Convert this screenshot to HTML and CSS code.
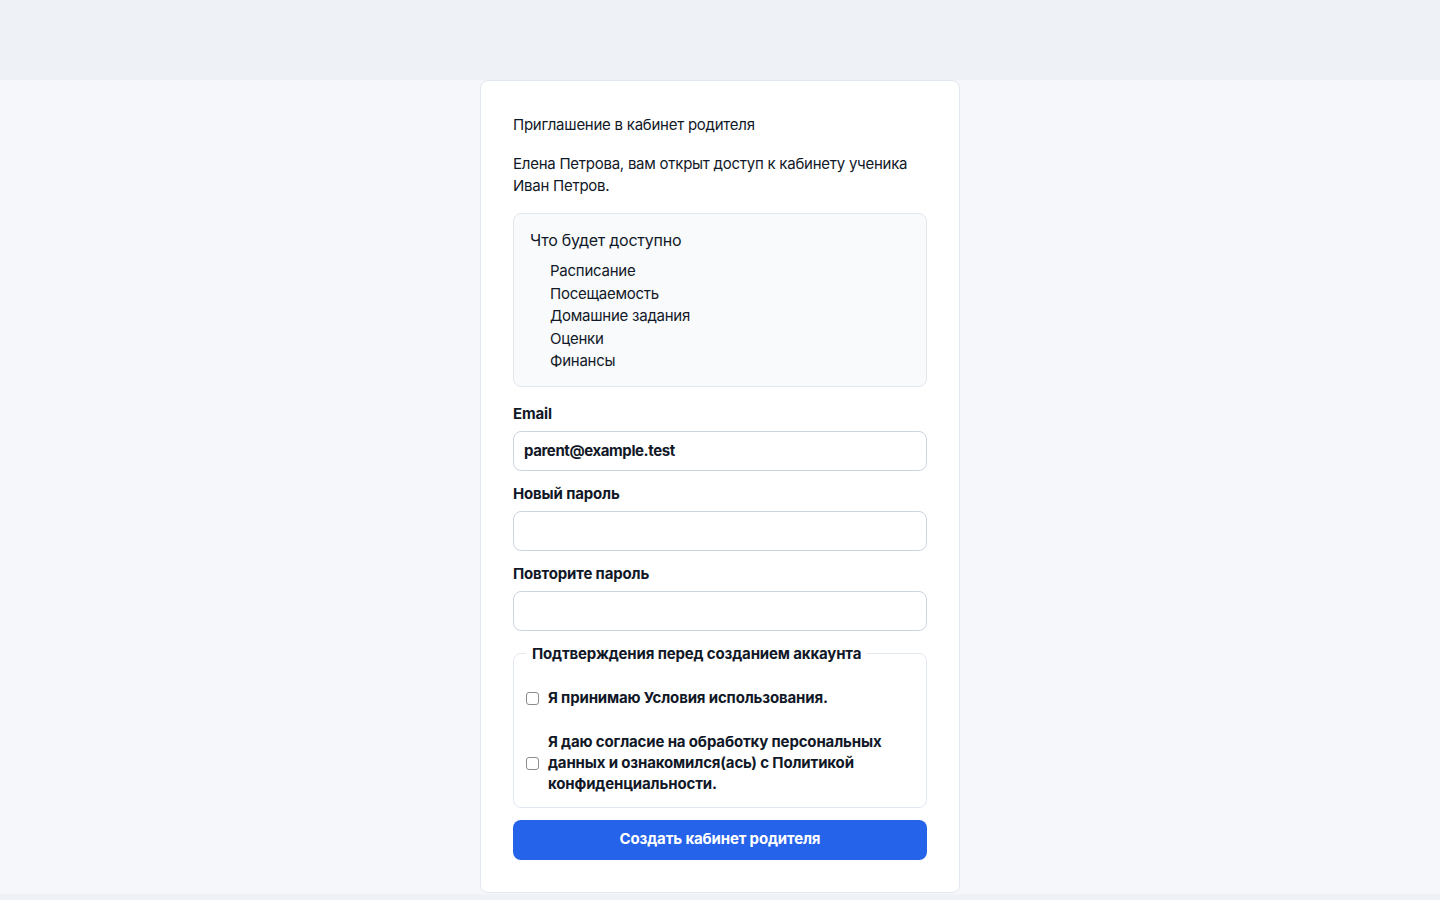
FILE: index.html
```html
<!DOCTYPE html>
<html lang="ru">
<head>
<meta charset="utf-8">
<title>Приглашение в кабинет родителя</title>
<link rel="stylesheet" href="styles.css">
</head>
<body>
<header class="topbar"></header>
<main class="page">
  <section class="card">
    <p class="title">Приглашение в кабинет родителя</p>
    <p class="intro">Елена Петрова, вам открыт доступ к кабинету ученика Иван Петров.</p>
    <div class="access">
      <h2 class="access-title">Что будет доступно</h2>
      <ul class="access-list">
        <li>Расписание</li>
        <li>Посещаемость</li>
        <li>Домашние задания</li>
        <li>Оценки</li>
        <li>Финансы</li>
      </ul>
    </div>
    <form class="form">
      <label class="field-label" for="email">Email</label>
      <input class="input" id="email" type="email" value="parent@example.test">
      <label class="field-label" for="pass">Новый пароль</label>
      <input class="input" id="pass" type="password">
      <label class="field-label" for="pass2">Повторите пароль</label>
      <input class="input" id="pass2" type="password">
      <fieldset class="consents">
        <legend class="consents-legend">Подтверждения перед созданием аккаунта</legend>
        <div class="checks">
          <label class="check"><input type="checkbox" class="checkbox"><span>Я принимаю Условия использования.</span></label>
          <label class="check"><input type="checkbox" class="checkbox"><span>Я даю согласие на обработку персональных данных и ознакомился(ась) с Политикой конфиденциальности.</span></label>
        </div>
      </fieldset>
      <button type="button" class="submit">Создать кабинет родителя</button>
    </form>
  </section>
</main>
</body>
</html>
```

FILE: styles.css
```css
* { box-sizing: border-box; }
html, body { margin: 0; padding: 0; }
body {
  background: #eef1f6;
  font-family: Inter, "Noto Sans", sans-serif;
  color: #111827;
  font-size: 15px;
  line-height: 1.5;
  letter-spacing: -0.25px;
}
.topbar {
  height: 80px;
  background: #eef1f6;
}
.page {
  background: #f5f7fa;
  display: flex;
  justify-content: center;
  padding-bottom: 1px;
}
.card {
  width: 480px;
  background: #ffffff;
  border: 1px solid #e2e8f0;
  border-radius: 8px;
  padding: 33px 32px 32px;
}
.title {
  margin: 0 0 17px;
  line-height: 22px;
}
.intro {
  margin: 0 0 16px;
  line-height: 22px;
}
.access {
  background: #f8fafc;
  border: 1px solid #e2e8f0;
  border-radius: 8px;
  padding: 14px 16px 13px;
}
.access-title {
  margin: 0 0 8px;
  font-size: 16px;
  font-weight: 400;
  line-height: 24px;
}
.access-list {
  list-style: none;
  margin: 0;
  padding: 0 0 0 20px;
  line-height: 22.5px;
}
.form {
  display: flex;
  flex-direction: column;
  margin-top: 16px;
}
.field-label {
  font-size: 15px;
  font-weight: 700;
  line-height: 21px;
  letter-spacing: -0.15px;
  margin-bottom: 7px;
}
.input {
  height: 40px;
  border: 1px solid #cbd5e1;
  border-radius: 8px;
  padding: 0 10px;
  font: inherit;
  font-weight: 700;
  letter-spacing: -0.4px;
  color: #111827;
  background: #fff;
  margin-bottom: 12px;
  outline: none;
}
.consents {
  margin: 0 0 12px;
  border: 1px solid #e2e8f0;
  border-radius: 8px;
  padding: 0 12px 13px;
}
.consents-legend {
  padding: 0 6px;
  font-size: 15px;
  font-weight: 700;
  line-height: 21px;
  letter-spacing: -0.15px;
}
.checks {
  display: flex;
  flex-direction: column;
  gap: 23px;
  padding-top: 23px;
}
.check {
  display: flex;
  align-items: center;
  gap: 9px;
  font-size: 15px;
  font-weight: 700;
  line-height: 21px;
  letter-spacing: -0.15px;
}
.checkbox {
  appearance: none;
  -webkit-appearance: none;
  flex: none;
  width: 13px;
  height: 13px;
  margin: 2px 0 0;
  border: 1px solid #8c8c8c;
  border-radius: 3px;
  background: #fff;
}
.submit {
  height: 40px;
  border: none;
  border-radius: 8px;
  background: #2563eb;
  color: #ffffff;
  font: inherit;
  font-weight: 700;
  letter-spacing: -0.15px;
  cursor: pointer;
}
```
